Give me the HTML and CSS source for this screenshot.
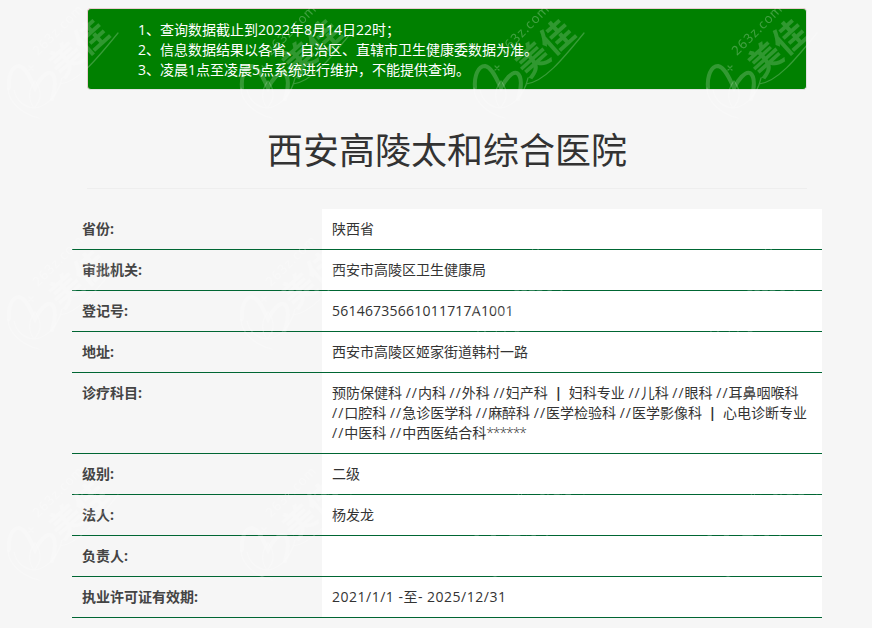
FILE: index.html
```html
<!DOCTYPE html>
<html lang="zh-CN">
<head>
<meta charset="utf-8">
<title>西安高陵太和综合医院</title>
<link rel="stylesheet" href="styles.css">
</head>
<body>
<main class="container">
  <section class="alert">
    <p>1、查询数据截止到2022年8月14日22时；</p>
    <p>2、信息数据结果以各省、自治区、直辖市卫生健康委数据为准。</p>
    <p>3、凌晨1点至凌晨5点系统进行维护，不能提供查询。</p>
  </section>
  <header class="page-header"><h1>西安高陵太和综合医院</h1></header>
  <table class="info">
    <tr><th>省份:</th><td>陕西省</td></tr>
    <tr><th>审批机关:</th><td>西安市高陵区卫生健康局</td></tr>
    <tr><th>登记号:</th><td><span class="num">56146735661011717A1001</span></td></tr>
    <tr><th>地址:</th><td>西安市高陵区姬家街道韩村一路</td></tr>
    <tr><th>诊疗科目:</th><td>预防保健科 <span class="sl">//</span>内科 <span class="sl">//</span>外科 <span class="sl">//</span>妇产科 <b class="sep">|</b> 妇科专业 <span class="sl">//</span>儿科 <span class="sl">//</span>眼科 <span class="sl">//</span>耳鼻咽喉科 <span class="sl">//</span>口腔科 <span class="sl">//</span>急诊医学科 <span class="sl">//</span>麻醉科 <span class="sl">//</span>医学检验科 <span class="sl">//</span>医学影像科 <b class="sep">|</b> 心电诊断专业 <span class="sl">//</span>中医科 <span class="sl">//</span>中西医结合科<span class="stars">******</span></td></tr>
    <tr><th>级别:</th><td>二级</td></tr>
    <tr><th>法人:</th><td>杨发龙</td></tr>
    <tr><th>负责人:</th><td></td></tr>
    <tr><th>执业许可证有效期:</th><td><span class="date">2021/1/1 -至- 2025/12/31</span></td></tr>
  </table>
</main>
<svg class="watermark" width="872" height="628" aria-hidden="true">
  <defs>
    <pattern id="wm" width="233" height="231" patternUnits="userSpaceOnUse">
      <text class="wm-url" transform="translate(38 56) rotate(-45)">263z.com</text>
      <text class="wm-name" transform="translate(62 79) rotate(-42)">美佳</text>
      <path class="wm-thick" d="M9 88C8 76 12 66 19 66C26 67 31 80 35 88C39 80 46 71 51 73C56 76 56 88 52 99"/>
      <path class="wm-thin" d="M8 88C8 102 22 114 39 118M14 90C17 102 24 107 34 108C46 107 58 96 62 78M34 108C28 100 28 90 35 81C42 90 42 100 34 108M60 84C78 82 96 60 118 33"/>
      <path class="wm-thin" d="M29 66l4 4M33 66l-4 4"/>
    </pattern>
  </defs>
  <rect width="872" height="628" fill="url(#wm)"/>
</svg>
</body>
</html>
```
FILE: styles.css
```css
* { box-sizing: border-box; }
html, body { margin: 0; }
body {
  position: relative;
  min-height: 628px;
  overflow: hidden;
  background: #f6f6f6;
  color: #333;
  font: 14px/20px "Open Sans", "Noto Sans CJK SC", sans-serif;
}
.container { width: 750px; margin-left: 72px; padding-top: 8px; }
.alert {
  margin: 0 15px;
  padding: 11px 15px 9px 50px;
  border: 1px solid #ebccd1;
  border-color: #ebccd1 #e3e3e3 #e3e3e3 #ebccd1;
  border-radius: 4px;
  background: #008000;
  color: #fff;
}
.alert p { margin: 0; }
.page-header {
  margin: 41px 15px 20px;
  padding-bottom: 9px;
  border-bottom: 1px solid #eee;
}
h1 {
  margin: 0 0 8px;
  font-size: 36px;
  font-weight: 400;
  line-height: 40px;
  text-align: center;
}
.info { width: 750px; border-collapse: collapse; table-layout: fixed; }
.info tr { border-bottom: 1px solid #006633; }
.info th, .info td { padding: 10px; vertical-align: top; text-align: left; height: 40px; }
.info th { width: 250px; font-weight: 700; color: #444; }
.info td { background: #fff; }
.num { letter-spacing: .22px; }
.date { letter-spacing: .5px; }
.sl { letter-spacing: 1px; }
.stars { letter-spacing: -1.1px; font-weight: 300; }
.sep { margin: 0 3px; }
.watermark { position: absolute; top: 0; left: 0; pointer-events: none; }
.wm-url { fill: #fff; fill-opacity: .26; font: 13px "Open Sans", sans-serif; letter-spacing: 1px; }
.wm-name { fill: #fff; fill-opacity: .19; font: 700 33px "Noto Sans CJK SC", sans-serif; }
.wm-thick, .wm-thin { fill: none; stroke: #fff; stroke-linecap: round; }
.wm-thick { stroke-width: 4; stroke-opacity: .2; }
.wm-thin { stroke-width: 1.2; stroke-opacity: .22; }
```
